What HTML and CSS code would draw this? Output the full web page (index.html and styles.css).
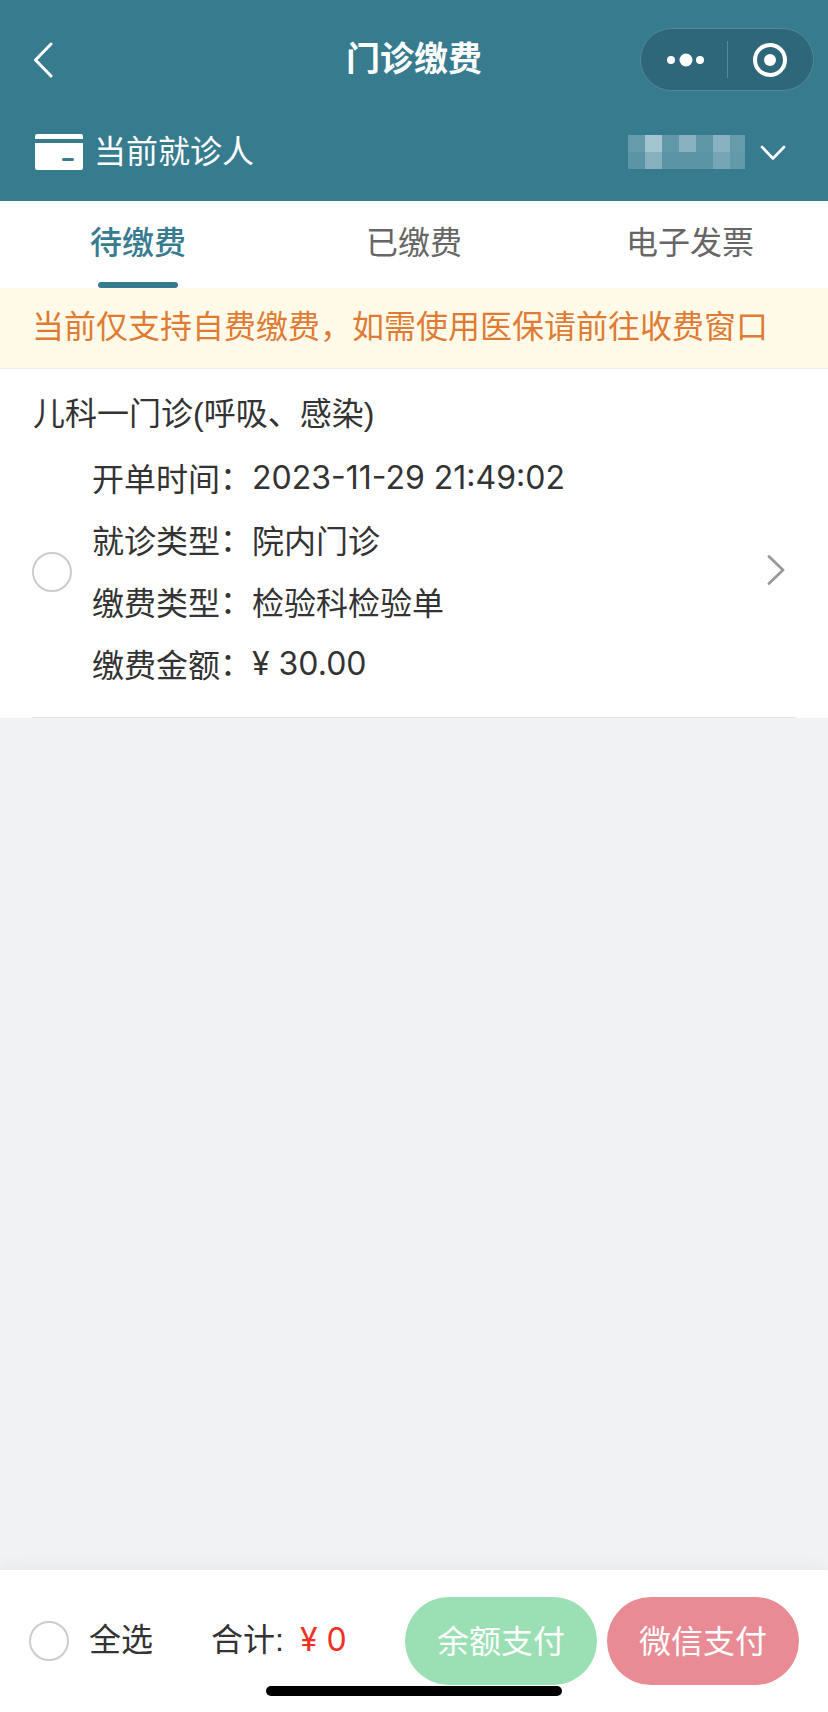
FILE: index.html
```html
<!DOCTYPE html>
<html lang="zh-CN">
<head>
<meta charset="utf-8">
<title>门诊缴费</title>
<link rel="stylesheet" href="styles.css">
</head>
<body>
<div class="page">
  <header class="header">
    <div class="nav">
      <div class="nav-left">
        <svg class="back" width="20" height="36" viewBox="0 0 20 36"><path d="M18 2 L2.5 18 L18 34" fill="none" stroke="#fff" stroke-width="3" stroke-linecap="round" stroke-linejoin="round"/></svg>
      </div>
      <h1 class="nav-title">门诊缴费</h1>
      <div class="capsule">
        <svg class="cap-more" width="54" height="14" viewBox="0 0 54 14"><circle cx="8" cy="7" r="4" fill="#fff"/><circle cx="23" cy="7" r="6.5" fill="#fff"/><circle cx="37" cy="7" r="4" fill="#fff"/></svg>
        <span class="cap-sep"></span>
        <svg class="cap-close" width="36" height="36" viewBox="0 0 36 36"><circle cx="18" cy="18" r="15" fill="none" stroke="#fff" stroke-width="4"/><circle cx="18" cy="18" r="6" fill="#fff"/></svg>
      </div>
    </div>
    <div class="patient">
      <svg class="card-icon" width="48" height="36" viewBox="0 0 48 36"><path d="M2 0h44a2 2 0 0 1 2 2v3H0V2a2 2 0 0 1 2-2z" fill="#fff"/><path d="M0 9h48v25a2 2 0 0 1-2 2H2a2 2 0 0 1-2-2z" fill="#fff"/><rect x="27" y="24" width="12" height="3" rx="1.5" fill="#377b8f"/></svg>
      <span class="patient-label">当前就诊人</span>
      <div class="mosaic" aria-hidden="true">
        <i class="m1"></i><i class="m2"></i><i class="m3"></i><i class="m4"></i><i class="m5"></i><i class="m4"></i><i class="m1"></i>
        <i class="m6"></i><i class="m7"></i><i class="m6"></i><i class="m6"></i><i class="m6"></i><i class="m8"></i><i class="m9"></i>
      </div>
      <svg class="down" width="26" height="16" viewBox="0 0 26 16"><path d="M2 2 L13 13.5 L24 2" fill="none" stroke="#fff" stroke-width="2.6" stroke-linecap="round" stroke-linejoin="round"/></svg>
    </div>
  </header>

  <nav class="tabs">
    <div class="tab tab-active">待缴费</div>
    <div class="tab">已缴费</div>
    <div class="tab">电子发票</div>
  </nav>

  <div class="notice">当前仅支持自费缴费，如需使用医保请前往收费窗口</div>

  <main class="list">
    <section class="item">
      <div class="item-title">儿科一门诊(呼吸、感染)</div>
      <div class="item-body">
        <span class="radio"></span>
        <div class="rows">
          <div class="row"><span class="row-label">开单时间<span class="colon" lang="zh-TW">：</span></span><span class="num">2023-11-29 21:49:02</span></div>
          <div class="row"><span class="row-label">就诊类型<span class="colon" lang="zh-TW">：</span></span><span>院内门诊</span></div>
          <div class="row"><span class="row-label">缴费类型<span class="colon" lang="zh-TW">：</span></span><span>检验科检验单</span></div>
          <div class="row"><span class="row-label">缴费金额<span class="colon" lang="zh-TW">：</span></span><span class="num">¥ 30.00</span></div>
        </div>
        <svg class="more" width="18" height="30" viewBox="0 0 18 30"><path d="M2 1.5 L16 15 L2 28.5" fill="none" stroke="#999" stroke-width="2.8" stroke-linecap="round" stroke-linejoin="round"/></svg>
      </div>
    </section>
  </main>

  <footer class="footer">
    <span class="radio"></span>
    <span class="all">全选</span>
    <span class="total">合计:<span class="amount num">¥ 0</span></span>
    <div class="actions">
      <button class="pay pay-balance">余额支付</button>
      <button class="pay pay-wechat">微信支付</button>
    </div>
    <span class="home"></span>
  </footer>
</div>
</body>
</html>
```
FILE: styles.css
```css
* { box-sizing: border-box; }
html, body { margin: 0; padding: 0; }
body {
  width: 828px;
  height: 1712px;
  overflow: hidden;
  font-family: "Liberation Sans", "Noto Sans CJK SC", sans-serif;
  color: #333;
  background: #f1f2f4;
}
.page { height: 1712px; display: flex; flex-direction: column; }
.num { font-family: "Inter", "Noto Sans CJK SC", sans-serif; }

.header { height: 201px; background: #377b8f; padding-top: 28px; display: flex; flex-direction: column; flex: none; }
.nav { height: 63px; display: grid; grid-template-columns: 1fr auto 1fr; align-items: center; padding: 0 14px; }
.nav-left { display: flex; align-items: center; padding-left: 19px; }
.back { display: block; }
.nav-title { margin: 0; font-size: 34px; font-weight: 700; color: #fff; line-height: 63px; }
.capsule {
  justify-self: end;
  width: 174px;
  height: 63px;
  border-radius: 32px;
  background: #2e6779;
  border: 1px solid #54899a;
  display: flex;
  align-items: center;
  padding-left: 22px;
}
.cap-more { flex: none; }
.cap-sep { width: 1px; height: 37px; background: #54899a; margin-left: 10px; }
.cap-close { margin-left: 24px; flex: none; }

.patient { display: flex; align-items: center; padding: 0 42px 0 35px; margin-top: 43px; height: 36px; }
.card-icon { flex: none; }
.patient-label { font-size: 32px; color: #fff; margin-left: 11px; line-height: 36px; flex: 1; }
.mosaic { display: grid; grid-template-columns: repeat(6, 17px) 15px; grid-auto-rows: 17px; }
.mosaic i { display: block; }
.m1 { background: #659bab; }
.m2 { background: #a3c5cf; }
.m3 { background: #6199a9; }
.m4 { background: #8ab1bf; }
.m5 { background: #5f97a7; }
.m6 { background: #5b94a5; }
.m7 { background: #88b1bf; }
.m8 { background: #76a6b5; }
.m9 { background: #629aaa; }
.down { margin-left: 15px; margin-top: 1px; flex: none; }

.tabs { height: 87px; background: #fff; display: grid; grid-template-columns: repeat(3, 1fr); flex: none; }
.tab { position: relative; text-align: center; font-size: 32px; line-height: 84px; color: #666; }
.tab-active { color: #377b8f; font-weight: 500; }
.tab-active::after {
  content: "";
  position: absolute;
  left: 98px;
  bottom: 0;
  width: 80px;
  height: 6px;
  border-radius: 3px;
  background: #377b8f;
}

.notice {
  height: 81px;
  background: #fffbe8;
  border-bottom: 1px solid #ececec;
  color: #e07b36;
  font-size: 32px;
  line-height: 78px;
  padding-left: 32px;
  white-space: nowrap;
  flex: none;
}

.list { flex: 1; }
.item { background: #fff; height: 349px; padding-top: 24px; position: relative; }
.item::after {
  content: "";
  position: absolute;
  left: 32px;
  right: 32px;
  bottom: 0;
  height: 1px;
  background: #e6e6e6;
}
.item-title { font-size: 32px; line-height: 42px; padding-left: 33px; }
.item-body { display: flex; align-items: center; padding: 0 43px 0 32px; margin-top: 11px; }
.item-body .radio { margin-top: 3px; }
.rows { flex: 1; margin-left: 20px; }
.row { display: flex; height: 62px; align-items: center; font-size: 32px; white-space: nowrap; }
.row-label { width: 160px; flex: none; }
.colon { font-family: "Noto Sans CJK TC", sans-serif; font-feature-settings: "halt"; }
.more { flex: none; }

.radio { width: 40px; height: 40px; border: 2px solid #ccc; border-radius: 50%; flex: none; display: block; background: #fff; }

.footer {
  position: relative;
  height: 142px;
  flex: none;
  background: #fff;
  box-shadow: 0 0 20px rgba(0, 0, 0, 0.06);
  display: flex;
  align-items: flex-start;
  padding: 27px 29px 0 29px;
}
.footer .radio { margin-top: 24px; }
.all { font-size: 32px; line-height: 86px; margin-left: 20px; color: #333; }
.total { font-size: 32px; line-height: 86px; margin-left: 58px; color: #333; }
.amount { color: #ee3124; margin-left: 16px; }
.actions { margin-left: auto; display: flex; gap: 10px; }
.pay {
  width: 192px;
  height: 88px;
  border: 0;
  border-radius: 44px;
  padding: 0 0 5px;
  color: #fff;
  font-family: inherit;
  font-size: 32px;
}
.pay-balance { background: #9be0b4; }
.pay-wechat { background: #e88b95; }
.home {
  position: absolute;
  left: 266px;
  top: 116px;
  width: 296px;
  height: 10px;
  border-radius: 5px;
  background: #000;
}
```
